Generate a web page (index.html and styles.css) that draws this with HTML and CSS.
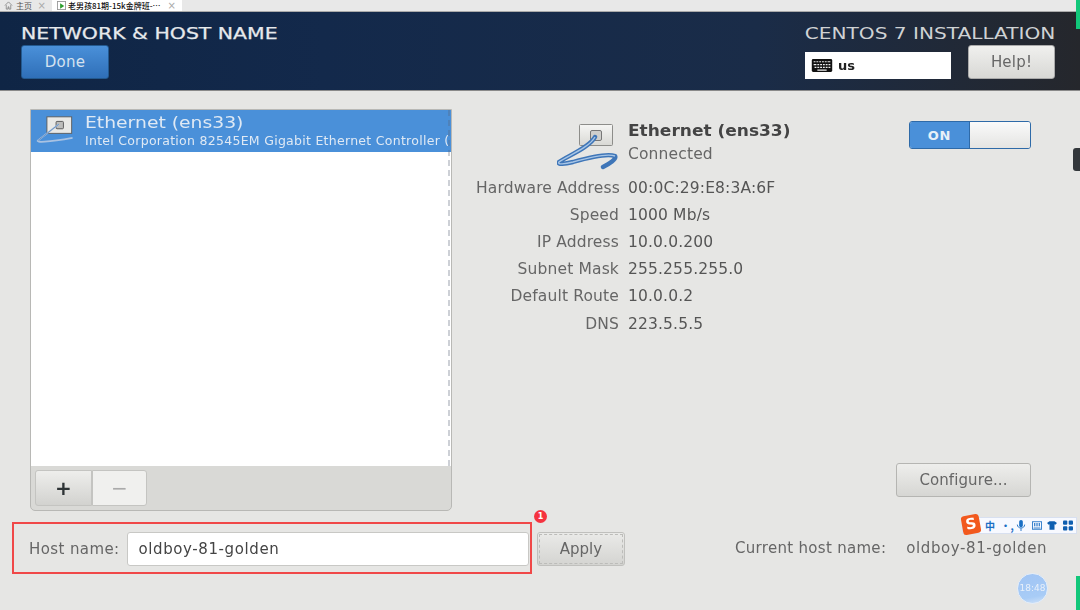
FILE: index.html
```html
<!DOCTYPE html>
<html lang="en">
<head>
<meta charset="utf-8">
<title>Network &amp; Host Name</title>
<link rel="stylesheet" href="styles.css">
</head>
<body>
<div class="screen">
  <nav class="tabs">
    <div class="tab home">
      <svg class="home-ico" viewBox="0 0 10 10"><path d="M1 5 5 1l4 4M2.500 4.500V9h2V6.500h1V9h2V4.500" fill="none" stroke="#777" stroke-width=".8"/></svg>
      <span>主页</span><span class="x">×</span>
    </div>
    <div class="tab active">
      <svg class="play-ico" viewBox="0 0 10 10"><rect x=".5" y=".5" width="9" height="9" fill="#fff" stroke="#999"/><path d="M3.500 2.500 8 5.500l-4.500 3z" fill="#2e9e2e"/></svg>
      <span>老男孩81期-15k金牌班-…</span><span class="x">×</span>
    </div>
  </nav>
  <header class="topbar">
    <div class="top-left">
      <h1>NETWORK &amp; HOST NAME</h1>
      <button class="done">Done</button>
    </div>
    <div class="top-right">
      <h2>CENTOS 7 INSTALLATION</h2>
      <div class="top-controls">
        <div class="kbd">
          <svg class="kbd-ico" viewBox="0 0 22 14"><rect width="22" height="14" rx="1.500" fill="#111"/><path d="M2 3h2M5 3h2M8 3h2M11 3h2M14 3h2M17 3h3M2 6h3M6 6h2M9 6h2M12 6h2M15 6h2M18 6h2M3 9h2M6 9h2M9 9h2M12 9h2M15 9h2M18 9h2M6 12h10" stroke="#eee" stroke-width="1.200"/></svg>
          <span>us</span>
        </div>
        <button class="help">Help!</button>
      </div>
    </div>
  </header>
  <main class="body">
    <div class="columns">
      <section class="list-panel">
        <div class="list">
          <div class="row selected">
            <svg class="row-ico" viewBox="0 0 48 36">
              <rect x="13" y="2" width="27" height="18" fill="#e9e9e6" stroke="#5b5b5b" stroke-width="1"/>
              <rect x="23" y="7" width="8" height="8" rx="1" fill="#bdbdbb" stroke="#555"/>
              <path d="M26 10 3 28c-2 2 10 2 38-3" fill="none" stroke="#a9c2e2" stroke-width="1.800"/>
              <path d="M26 10 3 28" fill="none" stroke="#3a6ea8" stroke-width=".6"/>
            </svg>
            <div class="row-text">
              <div class="row-title">Ethernet (ens33)</div>
              <div class="row-sub">Intel Corporation 82545EM Gigabit Ethernet Controller (</div>
            </div>
          </div>
        </div>
        <div class="list-tools">
          <div class="tool-group">
            <button class="tool add">+</button>
            <button class="tool remove">−</button>
          </div>
        </div>
      </section>
      <section class="detail">
        <div class="detail-head">
          <svg class="detail-ico" viewBox="0 0 64 50">
            <defs><linearGradient id="plate" x1="0" y1="0" x2="0" y2="1"><stop offset="0" stop-color="#f6f6f4"/><stop offset="1" stop-color="#d8d8d4"/></linearGradient></defs>
            <rect x="22.500" y="4.500" width="33" height="21" rx="1" fill="url(#plate)" stroke="#8d8d8a"/>
            <rect x="33.500" y="10.500" width="11" height="10" rx="1.500" fill="#cfcfcc" stroke="#777"/>
            <path d="M38 17C32 28 10 36 2 42c-2 3 6 2 14 0 14-4 34-9 42-6 2 3-6 8-12 11" fill="none" stroke="#3f76b8" stroke-width="4.400" stroke-linecap="round"/>
            <path d="M38 17C32 28 10 36 2 42c-2 3 6 2 14 0 14-4 34-9 42-6" fill="none" stroke="#a7c5e6" stroke-width="1.400"/>
          </svg>
          <div class="detail-title">
            <div class="name">Ethernet (ens33)</div>
            <div class="state">Connected</div>
          </div>
          <div class="toggle"><span class="on">ON</span><span class="knob"></span></div>
        </div>
        <dl class="props">
          <dt>Hardware Address</dt><dd>00:0C:29:E8:3A:6F</dd>
          <dt>Speed</dt><dd>1000 Mb/s</dd>
          <dt>IP Address</dt><dd>10.0.0.200</dd>
          <dt>Subnet Mask</dt><dd>255.255.255.0</dd>
          <dt>Default Route</dt><dd>10.0.0.2</dd>
          <dt>DNS</dt><dd>223.5.5.5</dd>
        </dl>
        <div class="cfg-row"><button class="configure">Configure...</button></div>
      </section>
    </div>
    <div class="host-row">
      <div class="host-box">
        <label for="hn">Host name:</label>
        <input id="hn" class="host-input" value="oldboy-81-golden">
        <span class="badge">1</span>
      </div>
      <button class="apply">Apply</button>
      <div class="current"><span>Current host name:</span><span class="current-value">oldboy-81-golden</span></div>
    </div>
  </main>
  <div class="ime">
    <span class="ime-logo">S</span>
    <span class="ime-item">中</span>
    <span class="ime-item dots">•,</span>
    <svg class="ime-svg" viewBox="0 0 10 12"><rect x="3" y="0" width="4" height="8" rx="2" fill="#1a6fc4"/><path d="M1 5c0 5 8 5 8 0M5 9v3" fill="none" stroke="#1a6fc4"/></svg>
    <svg class="ime-svg" viewBox="0 0 12 10"><rect x=".5" y=".5" width="11" height="9" fill="none" stroke="#1a6fc4"/><path d="M3 2v4M5 2v4M7 2v4M9 2v4M2 8h8" stroke="#1a6fc4"/></svg>
    <svg class="ime-svg" viewBox="0 0 12 10"><path d="M0 2 3 0h6l3 2-2 2-1-.500V10H3V3.500L2 4z" fill="#0f5fb0"/></svg>
    <svg class="ime-svg" viewBox="0 0 10 10"><rect width="4.300" height="4.300" rx="1" fill="#0f5fb0"/><rect x="5.700" width="4.300" height="4.300" rx="1" fill="#0f5fb0"/><rect y="5.700" width="4.300" height="4.300" rx="1" fill="#0f5fb0"/><rect x="5.700" y="5.700" width="4.300" height="4.300" rx="1" fill="#0f5fb0"/></svg>
  </div>
  <div class="clock">18:48</div>
  <div class="side-handle"></div>
  <div class="green g1"></div>
  <div class="green g2"></div>
</div>
</body>
</html>
```
FILE: styles.css
```css
* { box-sizing: border-box; }
html, body { margin: 0; padding: 0; }
body { width: 1080px; height: 610px; overflow: hidden; background: #e6e6e4; font-family: "DejaVu Sans", sans-serif; }
.screen { position: relative; width: 1080px; height: 610px; display: flex; flex-direction: column; filter: blur(.35px); }
button { font-family: inherit; margin: 0; padding: 0; }

.tabs { height: 12px; background: #e8e8e8; display: flex; border-bottom: 1px solid #aaa; overflow: hidden; flex: none; }
.tab { display: flex; align-items: center; height: 11px; font: 8px "Noto Sans CJK SC", sans-serif; color: #333; white-space: nowrap; }
.tab.home { width: 52px; padding-left: 4px; gap: 3px; color: #555; }
.tab.active { width: 130px; background: #fff; padding-left: 5px; gap: 2px; color: #111; font-weight: 500; }
.home-ico, .play-ico { width: 9px; height: 9px; flex: none; }
.x { color: #aaa; font: 400 10px "DejaVu Sans", sans-serif; margin-left: auto; margin-right: 6px; }

.topbar { height: 79px; flex: none; display: flex; justify-content: space-between; padding: 13px 25px 0 21px; background: linear-gradient(90deg, #0f2545 0%, #13294b 30%, #1a2c48 70%, #25272c 100%); border-bottom: 1px solid #8a8a8a; }
.top-left { display: flex; flex-direction: column; gap: 2px; }
h1 { margin: 0; font: 400 15.500px/18px "DejaVu Sans", sans-serif; -webkit-text-stroke: .25px #e6e9ec; color: #e6e9ec; white-space: nowrap; transform: scaleX(1.318); transform-origin: left center; }
.done { width: 88px; height: 34px; border: 1px solid #23598f; border-radius: 3px; background: linear-gradient(#4a90d9, #2f6fb8); color: #d5e2f0; font-size: 15px; letter-spacing: .2px; }
.top-right { display: flex; flex-direction: column; align-items: flex-end; gap: 2px; }
h2 { margin: 0; font: 400 16px/18px "DejaVu Sans", sans-serif; color: #cfd2d4; white-space: nowrap; transform: scaleX(1.257); transform-origin: right center; }
.top-controls { display: flex; gap: 17px; align-items: flex-start; }
.kbd { width: 146px; height: 27px; margin-top: 7px; background: #fff; display: flex; align-items: center; padding-left: 6px; gap: 5px; font-size: 13px; font-weight: 700; color: #222; }
.kbd-ico { width: 22px; height: 13px; }
.help { width: 87px; height: 34px; border: 1px solid #aaa; border-radius: 3px; background: linear-gradient(#f0f0ee, #d8d8d5); color: #666; font-size: 15px; letter-spacing: .2px; }

.body { flex: 1; display: flex; flex-direction: column; padding-top: 18px; }
.columns { display: flex; height: 402px; padding-left: 30px; }
.list-panel { width: 422px; border: 1px solid #b8b8b5; border-radius: 0 0 5px 5px; background: #d9d9d6; display: flex; flex-direction: column; }
.list { position: relative; height: 356px; background: #fff; flex: none; overflow: hidden; }
.list::after { content: ""; position: absolute; top: 0; bottom: 0; right: 1px; border-right: 2px dashed rgba(90, 100, 120, .3); }
.row { height: 42px; background: #4a90d9; display: flex; align-items: center; padding-left: 4px; gap: 6px; color: #dfe9f4; overflow: hidden; }
.row-ico { width: 44px; height: 33px; flex: none; }
.row-text { white-space: nowrap; min-width: 0; }
.row-title { font-size: 15px; line-height: 20px; transform: scaleX(1.25); transform-origin: left center; }
.row-sub { font-size: 12.500px; letter-spacing: .28px; line-height: 16px; }
.list-tools { flex: 1; padding: 4px; }
.tool-group { display: flex; }
.tool { width: 55px; height: 36px; border: 1px solid #c4c4c1; background: #f0f0ee; font-size: 20px; color: #aaa; border-radius: 0 3px 3px 0; }
.tool.add { width: 57px; background: linear-gradient(#eeeeec, #d2d2cf); color: #2e3436; font-weight: 700; border-radius: 3px 0 0 3px; }

.detail { width: 580px; margin-left: 24px; padding-right: 20px; display: flex; flex-direction: column; }
.detail-head { display: flex; height: 60px; padding: 11px 0 0 81px; }
.detail-ico { width: 64px; height: 50px; flex: none; }
.detail-title { margin-left: 7px; }
.name { font-size: 15px; line-height: 19px; font-weight: 700; color: #444; margin-top: 2px; transform: scaleX(1.134); transform-origin: left center; }
.state { font-size: 15.500px; letter-spacing: .15px; line-height: 26px; color: #666; }
.toggle { margin-left: auto; margin-right: 5px; margin-top: 1px; width: 122px; height: 28px; border: 1px solid #2e6aa8; border-radius: 3px; display: flex; overflow: hidden; }
.on { width: 60px; background: #4a90d9; color: #e8f0f8; font-size: 13px; letter-spacing: .8px; font-weight: 700; display: flex; align-items: center; justify-content: center; border-right: 1px solid #2e6aa8; }
.knob { flex: 1; background: linear-gradient(#fafafa, #e4e4e2); }
.props { margin: 5px 0 0; display: grid; grid-template-columns: 143px auto; grid-auto-rows: 27.200px; column-gap: 9px; align-items: center; font-size: 15.500px; letter-spacing: .15px; color: #666; }
.props dt { text-align: right; white-space: nowrap; color: #666; }
.props dd { margin: 0; color: #555; }
.cfg-row { margin-top: auto; display: flex; justify-content: flex-end; padding-right: 5px; padding-bottom: 14px; }
.configure { width: 135px; height: 34px; border: 1px solid #b5b5b2; border-radius: 3px; background: linear-gradient(#eeeeec, #d6d6d3); color: #666; font-size: 15px; letter-spacing: .1px; }

.host-row { display: flex; align-items: center; margin-top: 11px; padding-left: 12px; }
.host-box { position: relative; width: 520px; height: 52px; border: 2px solid #f04848; display: flex; align-items: center; padding: 2px 0 0 15px; gap: 7px; }
.host-box label { font-size: 15px; letter-spacing: .4px; color: #666; white-space: nowrap; }
.host-input { width: 402px; height: 34px; border: 1px solid #c8c8c5; border-radius: 3px; background: #fff; padding: 0 11px; font: 15px "DejaVu Sans", sans-serif; letter-spacing: .6px; color: #444; outline: none; flex: none; }
.badge { position: absolute; top: -14px; right: -17px; width: 13px; height: 13px; border-radius: 50%; background: #f5333f; color: #fff; font: 700 8px/13px "DejaVu Sans", sans-serif; text-align: center; }
.apply { width: 88px; height: 34px; margin: 2px 0 0 5px; border: 1px solid #c0c0bd; border-radius: 3px; outline: 1px dashed #bcbcb9; outline-offset: -3px; background: linear-gradient(#eaeae8, #d4d4d1); color: #666; font-size: 15px; }
.current { margin-left: 110px; display: flex; gap: 20px; font-size: 15px; letter-spacing: .3px; color: #666; white-space: nowrap; }
.current-value { letter-spacing: .6px; }

.ime { position: absolute; left: 962px; top: 517px; width: 115px; height: 17px; background: #f7f9ff; border: 1px solid #d8e0f0; display: flex; align-items: center; gap: 5.600px; padding-left: 22px; }
.ime-logo { position: absolute; left: -1px; top: -3px; width: 18px; height: 19px; background: #f2591d; color: #fff; font: 700 15px/19px "DejaVu Sans", sans-serif; text-align: center; border-radius: 3px; transform: rotate(-10deg); }
.ime-item { font: 700 10px "Noto Sans CJK SC", sans-serif; color: #1a6fc4; width: 10px; }
.ime-svg { width: 10px; height: 11px; flex: none; }
.clock { position: absolute; left: 1017px; top: 573px; width: 31px; height: 31px; border-radius: 50%; background: linear-gradient(170deg, #a0c4f4 0%, #a8ccf6 75%, #cfe2f8 100%); border: 1px solid #e2ecf8; color: #e8f0fa; font: 9px/29px "DejaVu Sans", sans-serif; text-align: center; }
.side-handle { position: absolute; left: 1073px; top: 148px; width: 7px; height: 23px; background: #33373b; border-radius: 3px 0 0 3px; }
.green { position: absolute; left: 1076px; width: 4px; background: #12c77a; }
.g1 { top: 0; height: 29px; }
.g2 { top: 576px; height: 34px; }
```
